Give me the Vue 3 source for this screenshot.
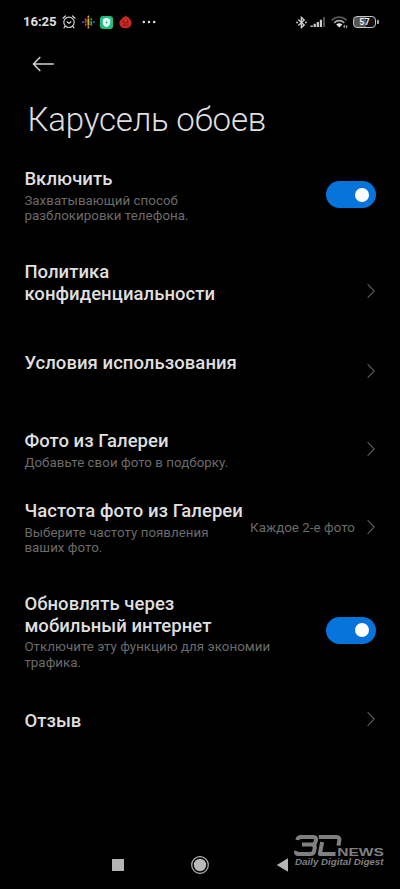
<script setup>
import { ref } from 'vue'

const rows = ref([
  { id: 'enable', title: ['Включить'], note: ['Захватывающий способ', 'разблокировки телефона.'], toggle: true },
  { id: 'privacy', title: ['Политика', 'конфиденциальности'] },
  { id: 'terms', title: ['Условия использования'] },
  { id: 'gallery', title: ['Фото из Галереи'], note: ['Добавьте свои фото в подборку.'] },
  { id: 'frequency', title: ['Частота фото из Галереи'], note: ['Выберите частоту появления', 'ваших фото.'], value: 'Каждое 2-е фото' },
  { id: 'mobile', title: ['Обновлять через', 'мобильный интернет'], note: ['Отключите эту функцию для экономии', 'трафика.'], toggle: true },
  { id: 'feedback', title: ['Отзыв'] },
])
</script>

<template>
  <main class="screen">
    <header class="status">
      <span class="clock">16:25</span>
      <svg class="alarm" width="14" height="14" viewBox="0 0 14 14" fill="none" stroke="#d4d4d4" stroke-width="1.2" stroke-linecap="round">
        <circle cx="7" cy="7.3" r="5.2" />
        <path d="M1 3.2 3.4 1M13 3.2 10.6 1M2.9 11.7 2 12.8M11.1 11.7 12 12.8M5 6.8l2 1.7 2-1.7" />
      </svg>
      <svg class="podcast" width="13" height="14" viewBox="0 0 13 14" fill="none" stroke-width="1.9" stroke-linecap="round">
        <path stroke="#2867c4" d="M1 6.9v.3M12 6.9v.3" />
        <path stroke="#c43a30" d="M3.7 4.3v3.3M3.7 9.8v.2" />
        <path stroke="#d9a63a" d="M6.4 1.5v.4M6.4 4.3v5.6M6.4 12.2v.3" />
        <path stroke="#36964c" d="M9.2 4v.2M9.2 6.7v3.2" />
      </svg>
      <svg class="shield" width="13" height="13" viewBox="0 0 13 13">
        <rect width="13" height="13" rx="3" fill="#1dbe82" />
        <path d="M6.5 1.8 10.2 3.2V6.7C10.2 8.9 8.6 10.3 6.5 11.1 4.4 10.3 2.8 8.9 2.8 6.7V3.2Z" fill="#f1fff9" />
        <path d="M6.8 4.1 5.2 6.8h1.2L6.2 8.9 7.9 6.1H6.8Z" fill="#2db98a" />
      </svg>
      <svg class="flame" width="13" height="14" viewBox="0 0 13 14">
        <path d="M6.6.3 8 2.1 9.3 1.7 10 3.3C11.8 4.5 12.7 6 12.5 8.4 12.2 11.5 9.8 13.3 6.5 13.3 3 13.3.6 11.4.5 8.2.4 6 1.5 4.4 3.3 3.2L4 1.9 5.3 2.2Z" fill="#c82b25" />
        <path d="M4.3 4.8V7.2M8.7 4.8V7.2M4.3 7.8h4.4M3.3 10.9 5 9.8 6.5 10.4 8 9.8 9.7 10.9" fill="none" stroke="#7d1713" stroke-width="1" />
      </svg>
      <svg class="dots" width="14" height="4" viewBox="0 0 14 4" fill="#ddd">
        <circle cx="1.8" cy="2" r="1.25" /><circle cx="7" cy="2" r="1.25" /><circle cx="12.2" cy="2" r="1.25" />
      </svg>
      <span class="spacer"></span>
      <svg class="bluetooth" width="11" height="13" viewBox="0 0 11 13" fill="none" stroke="#cfcfcf" stroke-width="1.35">
        <path d="M2.3 3.4 8.2 8.9 5.4 11.6V1.4L8.2 4.1 2.3 9.6" />
        <path d="M.2 6.5h1.8M9 6.5h1.8" stroke-width="1.7" />
      </svg>
      <svg class="signal" width="16" height="12" viewBox="0 0 16 12">
        <path fill="#cfcfcf" d="M.6 9.4h2.2V11H.6zM3.6 7.8h2.2V11H3.6zM6.7 6h2.2v5H6.7zM9.8 3.8H12V11H9.8z" />
        <path fill="#4e4e4e" d="M13 1h2v10h-2z" />
      </svg>
      <svg class="wifi" width="17" height="13" viewBox="0 0 17 13" fill="none" stroke-width="1.7">
        <path stroke="#555" d="M.8 4.3C5 .1 11.5.1 15.7 4.3" />
        <path stroke="#a8a8a8" d="M3.2 6.8C6.1 4 10.4 4 13.3 6.8" />
        <path fill="#e4e4e4" d="M5.2 8.4C7 7 9.6 7 11.4 8.4L8.3 11.6Z" />
        <path stroke="#aaa" stroke-width="1" d="M13.4 8.9v2.6M12.4 10.2l1 1.3M15.4 12.2V9.6M15.4 9.7l1 1.2" />
      </svg>
      <span class="battery"><span class="level">57</span></span>
    </header>

    <nav class="toolbar">
      <svg width="23" height="16" viewBox="0 0 23 16" fill="none" stroke="#d4d4d4" stroke-width="1.5">
        <path d="M8.3 1 1.5 8l6.8 7M1.5 8h20.3" />
      </svg>
    </nav>

    <h1 class="heading">Карусель обоев</h1>

    <section class="list">
      <div v-for="row in rows" :key="row.id" class="row" :class="row.id">
        <div class="copy">
          <div class="title"><div v-for="line in row.title" :key="line"><span>{{ line }}</span></div></div>
          <div v-if="row.note" class="note"><div v-for="line in row.note" :key="line"><span>{{ line }}</span></div></div>
        </div>
        <div class="control">
          <span v-if="row.value" class="value">{{ row.value }}</span>
          <span v-if="row.toggle" class="switch"><span class="knob"></span></span>
          <svg v-else class="chevron" width="10" height="16" viewBox="0 0 10 16" fill="none" stroke="#5c5c5c" stroke-width="1.1">
            <path d="M1.6 1.2 8.2 8 1.6 14.8" />
          </svg>
        </div>
      </div>
    </section>

    <footer class="navbar">
      <span class="recents"></span>
      <svg class="home" width="18" height="18" viewBox="0 0 18 18">
        <circle cx="9" cy="9" r="8.3" fill="none" stroke="#b8b8b8" stroke-width="1.2" />
        <circle cx="9" cy="9" r="6.2" fill="#b8b8b8" />
      </svg>
      <svg class="back" width="12" height="14" viewBox="0 0 12 14"><path d="M.8 7 12 .3v13.4Z" fill="#b5b5b5" /></svg>
    </footer>

    <svg class="watermark" width="92" height="34" viewBox="0 0 92 34" fill="#808080">
      <g fill="none" stroke="#808080" stroke-width="4" stroke-linejoin="round">
        <path d="M3.4 6C3.8 3.8 4.8 3 7 3H19.4C21.6 3 22.3 4 21.9 6L21.6 7.6C21.2 9.6 20.2 10.5 18.2 10.5H8M18.2 10.9C20.2 10.9 21 11.8 20.7 13.8L20.3 16.4C19.9 18.9 18.8 20 16.3 20H4.4C2.5 20 1.8 19 2.2 17" />
        <path d="M24.8 3H42.4C44.9 3 45.8 4.2 45.3 6.6L44.4 11.6M28.2 8 25.8 20H41.5" />
      </g>
      <text class="news" x="43.2" y="21.8" textLength="46.6" lengthAdjust="spacingAndGlyphs">NEWS</text>
      <text class="tagline" x="1" y="30.7" textLength="88.5" lengthAdjust="spacingAndGlyphs">Daily Digital Digest</text>
    </svg>
  </main>
</template>

<style>
body { background: #000; }
</style>

<style scoped>
.screen {
  position: relative;
  display: flex;
  flex-direction: column;
  box-sizing: border-box;
  width: 400px;
  height: 889px;
  overflow: hidden;
  background: #000;
  color: #dfdfdf;
  font-family: Roboto, "Noto Sans", sans-serif;
}
.status { display: flex; align-items: center; height: 44px; padding: 0 21px 0 23px; }
.clock { width: 39px; font-size: 13.2px; font-weight: 700; line-height: 16px; letter-spacing: -0.1px; white-space: nowrap; }
.podcast { margin-left: 6px; }
.shield { margin-left: 5px; }
.flame { margin-left: 6px; }
.dots { margin-left: 10px; }
.spacer { flex: 1; }
.signal { margin-left: 3px; }
.wifi { margin-left: 5px; }
.battery {
  position: relative;
  box-sizing: border-box;
  width: 23px;
  height: 12px;
  margin-left: 5px;
  margin-right: 3px;
  border: 1.3px solid #c4c4c4;
  border-radius: 4px;
  background: linear-gradient(90deg, #555 57%, #111 57%);
}
.battery::after { content: ""; position: absolute; right: -3.5px; top: 3px; width: 2px; height: 4px; border-radius: 0 1px 1px 0; background: #aaa; }
.level { display: block; font-size: 9px; line-height: 10px; font-weight: 700; text-align: center; color: #eee; }
.toolbar { display: flex; align-items: center; height: 40px; padding-left: 32px; }
.heading { margin: 16px 0 0 27.4px; font-size: 33px; line-height: 40px; font-weight: 300; letter-spacing: -0.2px; white-space: nowrap; }
.list { padding: 0 24px; }
.row { display: flex; align-items: flex-start; justify-content: space-between; }
.copy { flex: none; padding-left: 0.4px; white-space: nowrap; }
.title { font-size: 18.5px; line-height: 21.5px; font-weight: 500; letter-spacing: 0.05px; }
.note { margin-top: 2px; font-size: 13.3px; line-height: 15.7px; letter-spacing: 0.05px; color: #6b6b6b; }
.control { display: flex; align-items: center; height: 28px; }
.value { margin-right: 11px; font-size: 13.3px; letter-spacing: 0.05px; color: #6b6b6b; white-space: nowrap; }
.switch { display: flex; align-items: center; justify-content: flex-end; box-sizing: border-box; width: 50px; height: 27.5px; padding-right: 7px; border-radius: 14px; background: #0774dc; }
.knob { width: 14px; height: 14px; border-radius: 50%; background: #fff; }
.enable { height: 93px; margin-top: 29px; }
.enable .control { margin-top: 11.5px; }
.privacy { height: 91px; }
.privacy .control { margin-top: 15px; }
.terms { height: 78px; }
.terms .control { margin-top: 4px; }
.gallery { height: 70px; }
.gallery .control { margin-top: 4px; }
.frequency { height: 93px; }
.frequency .control { margin-top: 12px; }
.mobile { height: 117px; }
.mobile .control { margin-top: 22.3px; }
.feedback { height: 40px; }
.feedback .control { margin-top: -6px; }
.navbar { display: grid; grid-template-columns: 12px 18px 12px; column-gap: 67px; align-items: center; margin-top: auto; height: 48px; padding-left: 112px; }
.recents { width: 12px; height: 12px; background: #b5b5b5; }
.watermark { position: absolute; left: 294px; top: 834px; font-family: "Liberation Sans", sans-serif; }
.news { font-size: 10.5px; font-weight: 700; }
.tagline { font-size: 8.3px; font-weight: 700; font-style: italic; }
</style>
